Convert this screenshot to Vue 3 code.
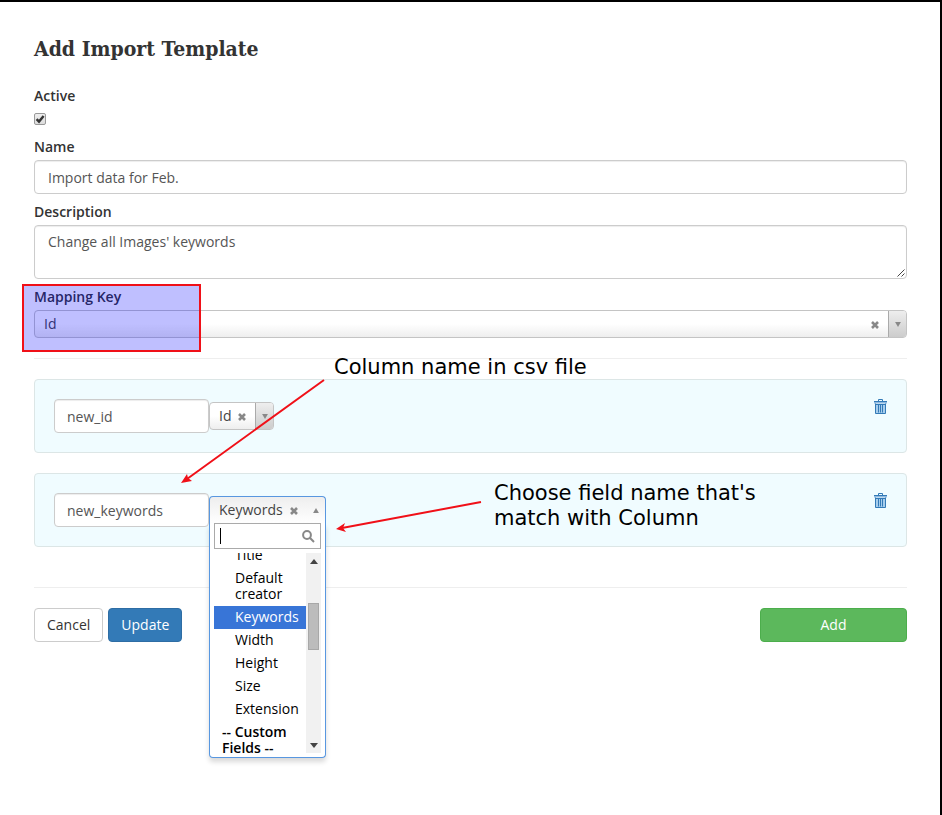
<script setup>
import { ref } from 'vue'

const active = ref(true)
const name = ref('Import data for Feb.')
const description = ref("Change all Images' keywords")
const search = ref('')
const columns = ref([
  { id: 1, column: 'new_id', field: 'Id', open: false },
  { id: 2, column: 'new_keywords', field: 'Keywords', open: true },
])
const fields = ['Title', 'Default creator', 'Keywords', 'Width', 'Height', 'Size', 'Extension']
</script>

<template>
  <main class="page">
    <form class="form" @submit.prevent>
      <h1>Add Import Template</h1>

      <div class="group">
        <label for="active">Active</label>
        <div class="check-row">
          <input id="active" v-model="active" class="check" type="checkbox" />
          <svg v-if="active" class="tick" viewBox="0 0 12 12" aria-hidden="true">
            <path d="M2.6 6.2 5 8.6 9.6 3" />
          </svg>
        </div>
      </div>

      <div class="group">
        <label for="name">Name</label>
        <input id="name" v-model="name" class="control" type="text" />
      </div>

      <div class="group">
        <label for="description">Description</label>
        <div class="area">
          <textarea id="description" v-model="description" class="control"></textarea>
          <svg class="grip" viewBox="0 0 8 8" aria-hidden="true">
            <path d="M0.5 7.5 7.5 0.5M4.5 7.5 7.5 4.5" />
          </svg>
        </div>
      </div>

      <div class="group">
        <label for="mapping">Mapping Key</label>
        <div class="chooser wide">
          <select id="mapping"><option>Id</option></select>
          <button class="clear" type="button" aria-label="Clear">
            <svg viewBox="0 0 8 8"><path d="M1 1 7 7M7 1 1 7" /></svg>
          </button>
          <span class="arrow"><svg viewBox="0 0 7 6"><path d="M0 0H7L3.5 6Z" /></svg></span>
        </div>
      </div>

      <hr />

      <section v-for="row in columns" :key="row.id" class="well">
        <input v-model="row.column" class="control column" type="text" aria-label="Column name" />
        <div class="chooser" :class="{ open: row.open }">
          <select aria-label="Field name"><option>{{ row.field }}</option></select>
          <button class="clear" type="button" aria-label="Clear">
            <svg viewBox="0 0 8 8"><path d="M1 1 7 7M7 1 1 7" /></svg>
          </button>
          <span class="arrow">
            <svg viewBox="0 0 7 6"><path :d="row.open ? 'M0 6H7L3.5 0Z' : 'M0 0H7L3.5 6Z'" /></svg>
          </span>
          <div v-if="row.open" class="drop">
            <div class="search">
              <span class="caret"></span>
              <input v-model="search" type="text" aria-label="Search fields" />
              <svg viewBox="0 0 13 13" aria-hidden="true">
                <circle cx="5" cy="5" r="3.9" />
                <path d="M7.8 7.8 12 12" />
              </svg>
            </div>
            <div class="results">
              <ul role="listbox" aria-label="Fields">
                <li
                  v-for="f in fields"
                  :key="f"
                  role="option"
                  :aria-selected="f === row.field"
                  :class="{ selected: f === row.field }"
                >{{ f }}</li>
                <li class="heading">-- Custom Fields --</li>
              </ul>
              <div class="scroll" aria-hidden="true">
                <svg viewBox="0 0 8 5"><path d="M0 5H8L4 0Z" /></svg>
                <div class="track"><div class="thumb"></div></div>
                <svg viewBox="0 0 8 5"><path d="M0 0H8L4 5Z" /></svg>
              </div>
            </div>
          </div>
        </div>
        <button class="trash" type="button" aria-label="Delete">
          <svg viewBox="0 0 13 15">
            <path class="bin" d="M1.5 5H11.5V14.5H1.5Z" />
            <path class="lid" d="M0 2.5H13V4.5H0Z" />
            <path class="line" d="M0 2.5H13M4.5 2.5V0.5H8.5V2.5M1.5 4.5V14.5H11.5V4.5M4.5 6V13.5M6.5 6V13.5M8.5 6V13.5M1.5 5.5H11.5" />
          </svg>
        </button>
      </section>

      <hr class="last" />

      <div class="actions">
        <button class="btn" type="button">Cancel</button>
        <button class="btn primary" type="submit">Update</button>
        <button class="btn success" type="button">Add</button>
      </div>
    </form>

    <div class="mark"></div>
    <p class="note first">Column name in csv file</p>
    <p class="note second">Choose field name that's<br />match with Column</p>
    <svg class="arrows" viewBox="0 0 500 600" aria-hidden="true">
      <path class="shaft" d="M324 380 187 479M481 502 342 528" />
      <path class="tip" d="M181 483 187 474 188 478 192 481ZM336 529 345 523 343 528 346 532Z" />
    </svg>
  </main>
</template>

<style>
body {
  background: #fff;
}
</style>

<style scoped>
* {
  box-sizing: border-box;
}
.page {
  position: relative;
  min-height: 100vh;
  padding: 34px 33px 0 34px;
  border-top: 2px solid #000;
  border-right: 2px solid #000;
  font: 14px/20px "Open Sans", "Noto Sans", sans-serif;
  color: #333;
}
input,
textarea,
select,
button {
  font: inherit;
  color: inherit;
  margin: 0;
}
h1 {
  margin: 0 0 24px;
  font: bold 21px/26px "DejaVu Serif Condensed", "DejaVu Serif", serif;
}
.group {
  margin-bottom: 8px;
}
label {
  display: block;
  margin-bottom: 3px;
  font-weight: 600;
}
.check-row {
  display: grid;
  grid-template-columns: 12px;
  align-items: center;
  height: 20px;
}
.check,
.tick {
  grid-area: 1 / 1;
  width: 12px;
  height: 12px;
}
.check {
  appearance: none;
  border: 1px solid #999;
  border-radius: 2px;
  background: linear-gradient(#eee, #ddd);
}
.tick {
  pointer-events: none;
  fill: none;
  stroke: #333;
  stroke-width: 2.4;
}
.control {
  display: block;
  width: 100%;
  height: 34px;
  padding: 6px 13px;
  border: 1px solid #ccc;
  border-radius: 4px;
  background: #fff;
  color: #555;
  outline: 0;
  box-shadow: inset 0 1px 1px rgba(0, 0, 0, 0.075);
}
.area {
  display: grid;
}
.area > * {
  grid-area: 1 / 1;
}
textarea.control {
  height: 54px;
  resize: none;
}
.grip {
  width: 8px;
  height: 8px;
  margin: 2px;
  place-self: end;
  fill: none;
  stroke: #444;
}
.chooser {
  position: relative;
  display: flex;
  height: 28px;
  border: 1px solid #c4c4c4;
  border-radius: 4px;
  background: linear-gradient(#fff 50%, #eee);
  color: #444;
}
.chooser select {
  appearance: none;
  flex: 1;
  padding: 0 0 0 9px;
  border: 0;
  background: none;
  outline: 0;
}
.clear {
  display: flex;
  align-items: center;
  padding: 2px 9px 0 6px;
  border: 0;
  background: none;
}
.clear svg {
  width: 8px;
  height: 8px;
  stroke: #888;
  stroke-width: 2.6;
}
.arrow {
  display: flex;
  align-items: center;
  justify-content: center;
  width: 18px;
  border-left: 1px solid #aaa;
  border-radius: 0 3px 3px 0;
  background: linear-gradient(#eee, #ccc);
}
.arrow svg {
  width: 6px;
  height: 5px;
  fill: #888;
}
hr {
  margin: 20px 0;
  border: 0;
  border-top: 1px solid #eee;
}
hr.last {
  margin-top: 40px;
}
.well {
  display: flex;
  align-items: center;
  margin-bottom: 20px;
  padding: 19px;
  border: 1px solid #dce6e6;
  border-radius: 4px;
  background: #f0fcff;
}
.column {
  width: 155px;
  padding: 6px 12px;
}
.open {
  border-color: #5897e0;
  border-bottom-color: transparent;
  border-radius: 4px 4px 0 0;
  background: linear-gradient(#eee, #fff);
}
.open .clear {
  padding-left: 7px;
}
.open .arrow {
  border: 0;
  background: none;
}
.drop {
  position: absolute;
  z-index: 2;
  top: 26px;
  left: -1px;
  right: -1px;
  padding: 0 4px 4px;
  border: 1px solid #5897e0;
  border-top: 0;
  border-radius: 0 0 4px 4px;
  background: #fff;
  box-shadow: 0 4px 5px rgba(0, 0, 0, 0.15);
  color: #000;
}
.search {
  display: flex;
  align-items: center;
  height: 26px;
  padding: 0 5px;
  border: 1px solid #aaa;
}
.search input {
  flex: 1;
  width: 0;
  padding: 0;
  border: 0;
  outline: 0;
  background: none;
}
.search svg {
  width: 13px;
  height: 13px;
  fill: none;
  stroke: #888;
  stroke-width: 2;
}
.caret {
  width: 1px;
  height: 16px;
  background: #000;
}
.results {
  display: flex;
  height: 200px;
  margin-top: 4px;
  overflow: hidden;
}
ul {
  flex: 1;
  min-width: 0;
  margin: -9px 0 0;
  padding: 0;
  list-style: none;
}
li {
  padding: 3px 7px 4px 21px;
  line-height: 16px;
}
li.selected {
  background: #3875d7;
  color: #fff;
}
li.heading {
  padding-left: 8px;
  font-weight: 600;
}
.scroll {
  display: flex;
  flex-direction: column;
  align-items: center;
  width: 15px;
  padding: 6px 0 5px;
  background: #f1f1f1;
}
.scroll svg {
  width: 8px;
  height: 5px;
  fill: #444;
}
.track {
  flex: 1;
  padding-top: 39px;
}
.thumb {
  width: 11px;
  height: 47px;
  border: 1px solid #a8a8a8;
  background: #bcbcbc;
}
.trash {
  align-self: flex-start;
  display: block;
  margin-left: auto;
  padding: 0;
  border: 0;
  background: none;
}
.trash svg {
  display: block;
  width: 13px;
  height: 15px;
}
.bin {
  fill: #a6cdec;
}
.lid {
  fill: #8fb9df;
}
.line {
  fill: none;
  stroke: #337ab7;
}
.actions {
  display: flex;
  gap: 5px;
}
.btn {
  height: 34px;
  padding: 0 12px;
  border: 1px solid #ccc;
  border-radius: 4px;
  background: #fff;
}
.primary {
  border-color: #2e6da4;
  background: #337ab7;
  color: #fff;
}
.success {
  width: 147px;
  margin-left: auto;
  border-color: #4cae4c;
  background: #5cb85c;
  color: #fff;
}
.mark {
  position: absolute;
  top: 282px;
  left: 22px;
  width: 179px;
  height: 68px;
  border: 2px solid #f01018;
  background: rgba(0, 0, 255, 0.25);
  pointer-events: none;
}
.note {
  position: absolute;
  margin: 0;
  color: #000;
  font: 21px/25px "DejaVu Sans", sans-serif;
  white-space: nowrap;
}
.first {
  top: 353px;
  left: 334px;
}
.second {
  top: 479px;
  left: 494px;
}
.arrows {
  position: absolute;
  top: -2px;
  left: 0;
  width: 500px;
  height: 600px;
  pointer-events: none;
}
.shaft {
  fill: none;
  stroke: #f01018;
  stroke-width: 2;
}
.tip {
  fill: #f01018;
}
</style>
